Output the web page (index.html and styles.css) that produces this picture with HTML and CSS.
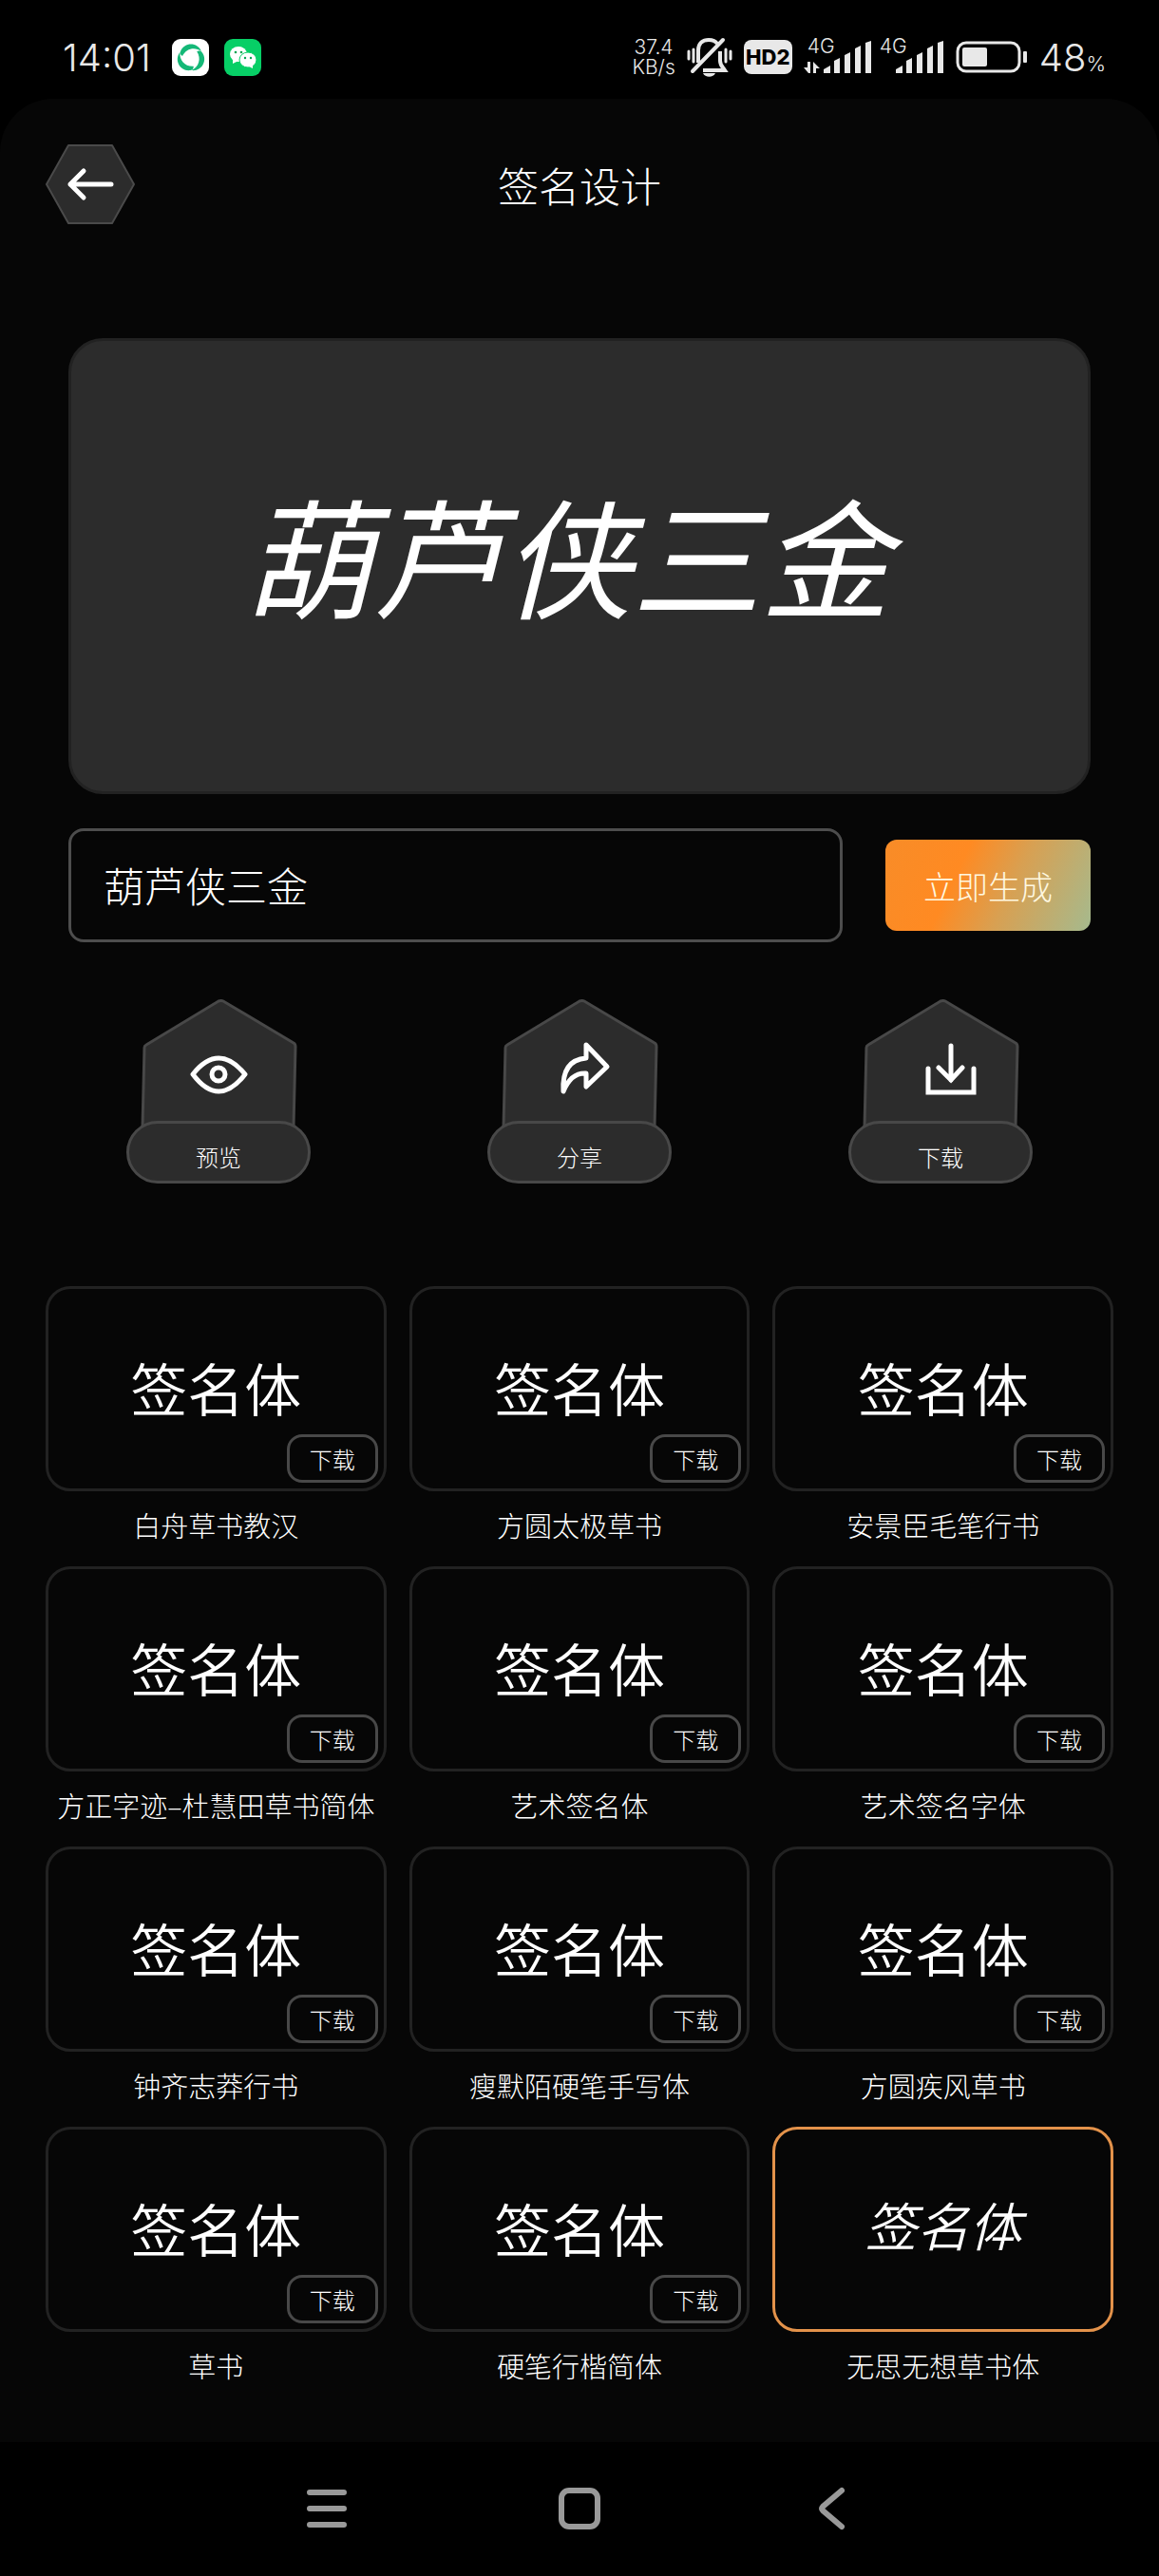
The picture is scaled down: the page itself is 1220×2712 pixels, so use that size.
FILE: index.html
```html
<!DOCTYPE html>
<html lang="zh-CN">
<head>
    <meta charset="UTF-8">
    <meta name="viewport" content="width=device-width, initial-scale=1.0">
    <title>签名设计</title>
    <link rel="stylesheet" href="styles.css">
</head>
<body>

    <!-- 状态栏 -->
    <div class="status-bar">
        <span class="clock">14:01</span>
        <svg class="app-icon" viewBox="0 0 39 39">
            <rect width="39" height="39" rx="9" fill="#fff"/>
            <g fill="#14b877">
                <path d="M9 13C13 3 27 3 31 13C24 8 15 10 11 18C9 17 8 15 9 13z"/>
                <path d="M9 13C13 3 27 3 31 13C24 8 15 10 11 18C9 17 8 15 9 13z" transform="rotate(120 20 20)"/>
                <path d="M9 13C13 3 27 3 31 13C24 8 15 10 11 18C9 17 8 15 9 13z" transform="rotate(240 20 20)"/>
            </g>
        </svg>
        <svg class="app-icon" viewBox="0 0 39 39">
            <rect width="39" height="39" rx="9" fill="#07cf66"/>
            <ellipse cx="15" cy="16" rx="9" ry="8" fill="#fff"/>
            <path d="M9 21v5l6-3z" fill="#fff"/>
            <ellipse cx="25" cy="22" rx="9" ry="8" fill="#fff" stroke="#07cf66" stroke-width="1"/>
            <path d="M26 29l4 2v-4z" fill="#fff"/>
            <g fill="#07a552"><circle cx="12" cy="14" r="1.300"/><circle cx="18" cy="14" r="1.300"/><circle cx="22" cy="20" r="1.200"/><circle cx="28" cy="20" r="1.200"/></g>
        </svg>

        <div class="status-right">
            <span class="net-speed">37.4<br>KB/s</span>
            <svg class="bell" viewBox="0 0 48 42">
                <g fill="none" stroke="#e8e8e8" stroke-width="4">
                    <path d="M12 27V14C12 6 17 3 23 3c4 0 7 1 9 4M35 15v10c0 5 3 7 5 10H17"/>
                    <path d="M6 36L38 3" stroke-linecap="round"/>
                    <path d="M2 15v8M7 13v13M41 13v13M46 15v8" stroke-width="3" stroke-linecap="round"/>
                </g>
                <path d="M17 38h13c-2 5-11 5-13 0z" fill="#e8e8e8"/>
            </svg>
            <span class="hd">HD2</span>
            <div class="signal">
                <span>4G</span>
                <svg viewBox="0 0 72 36">
                    <path d="M4 23h3v12H5L0 29h4zM10 35V23l7 7h-4v5z"/>
                    <path d="M21 35v-4l7-4v8zM32 35V22l6-3v16zM43 35V16l6-3v22zM54 35V9l6-3v29zM65 35V3l6-2v34z"/>
                </svg>
            </div>
            <div class="signal">
                <span>4G</span>
                <svg viewBox="0 0 72 36">
                    <path d="M21 35v-4l7-4v8zM32 35V22l6-3v16zM43 35V16l6-3v22zM54 35V9l6-3v29zM65 35V3l6-2v34z"/>
                </svg>
            </div>
            <svg class="battery" viewBox="0 0 76 34">
                <rect x="2" y="2" width="65" height="30" rx="9" fill="none" stroke="#e8e8e8" stroke-width="3"/>
                <rect x="7" y="7" width="26" height="20" rx="2" fill="#e8e8e8"/>
                <rect x="71" y="11" width="4" height="12" rx="1" fill="#e8e8e8"/>
            </svg>
            <span class="percent">48<small>%</small></span>
        </div>
    </div>

    <main class="app">
        <header class="title-bar">
            <button type="button" class="back" aria-label="返回">
                <svg viewBox="0 0 94 84">
                    <path d="M24 1h46l23 41-23 41H24L1 42z" fill="#2c2c2c" stroke="#4a4a4a" stroke-width="2" stroke-linejoin="round"/>
                    <path d="M40 28L26 42l14 14M26 42h43" fill="none" stroke="#fff" stroke-width="5" stroke-linecap="round" stroke-linejoin="round"/>
                </svg>
            </button>
            <h1>签名设计</h1>
        </header>

        <div class="preview">葫芦侠三金</div>

        <form class="name-form">
            <input type="text" name="name" value="葫芦侠三金" aria-label="姓名">
            <button type="submit">立即生成</button>
        </form>

        <!-- 预览、分享、下载 -->
        <div class="actions">
            <button type="button" class="action">
                <svg class="house" viewBox="0 0 194 134">
                    <path d="M17 134L19 51Q19 49 21 48L97 2Q100 1 102 2L176 46Q178 47 178 50L176 134" fill="#2c2c2c" stroke="#484848" stroke-width="3"/>
                    <path d="M70 79Q97 45 125 79Q97 115 70 79z" fill="none" stroke="#fff" stroke-width="5" stroke-linejoin="round"/>
                    <circle cx="97" cy="79" r="7" fill="none" stroke="#fff" stroke-width="5"/>
                </svg>
                <span>预览</span>
            </button>
            <button type="button" class="action">
                <svg class="house" viewBox="0 0 194 134">
                    <path d="M17 134L19 51Q19 49 21 48L97 2Q100 1 102 2L176 46Q178 47 178 50L176 134" fill="#2c2c2c" stroke="#484848" stroke-width="3"/>
                    <path d="M104 48L126 71L104 92V78Q88 77 80 97Q78 64 104 62z" fill="none" stroke="#fff" stroke-width="5" stroke-linejoin="round"/>
                </svg>
                <span>分享</span>
            </button>
            <button type="button" class="action">
                <svg class="house" viewBox="0 0 194 134">
                    <path d="M17 134L19 51Q19 49 21 48L97 2Q100 1 102 2L176 46Q178 47 178 50L176 134" fill="#2c2c2c" stroke="#484848" stroke-width="3"/>
                    <path d="M108 49V85M95 72L108 85L120 72M84 73V98H132V73" fill="none" stroke="#fff" stroke-width="5" stroke-linecap="round"/>
                </svg>
                <span>下载</span>
            </button>
        </div>

        <!-- 字体列表 -->
        <div class="font-list">
            <div class="font-item">
                <div class="font-card">签名体<button type="button">下载</button></div>
                <p>白舟草书教汉</p>
            </div>
            <div class="font-item">
                <div class="font-card">签名体<button type="button">下载</button></div>
                <p>方圆太极草书</p>
            </div>
            <div class="font-item">
                <div class="font-card">签名体<button type="button">下载</button></div>
                <p>安景臣毛笔行书</p>
            </div>
            <div class="font-item">
                <div class="font-card">签名体<button type="button">下载</button></div>
                <p>方正字迹–杜慧田草书简体</p>
            </div>
            <div class="font-item">
                <div class="font-card">签名体<button type="button">下载</button></div>
                <p>艺术签名体</p>
            </div>
            <div class="font-item">
                <div class="font-card">签名体<button type="button">下载</button></div>
                <p>艺术签名字体</p>
            </div>
            <div class="font-item">
                <div class="font-card">签名体<button type="button">下载</button></div>
                <p>钟齐志莽行书</p>
            </div>
            <div class="font-item">
                <div class="font-card">签名体<button type="button">下载</button></div>
                <p>瘦默陌硬笔手写体</p>
            </div>
            <div class="font-item">
                <div class="font-card">签名体<button type="button">下载</button></div>
                <p>方圆疾风草书</p>
            </div>
            <div class="font-item">
                <div class="font-card">签名体<button type="button">下载</button></div>
                <p>草书</p>
            </div>
            <div class="font-item">
                <div class="font-card">签名体<button type="button">下载</button></div>
                <p>硬笔行楷简体</p>
            </div>
            <div class="font-item">
                <div class="font-card selected">签名体</div>
                <p>无思无想草书体</p>
            </div>
        </div>
    </main>

    <!-- 系统导航栏 -->
    <nav class="nav-bar">
        <button type="button" aria-label="菜单">
            <svg viewBox="0 0 48 48"><path d="M6 6h36M6 23h36M6 40h36"/></svg>
        </button>
        <button type="button" aria-label="主页">
            <svg viewBox="0 0 48 48"><rect x="5" y="4" width="38" height="38" rx="8"/></svg>
        </button>
        <button type="button" aria-label="返回上一页">
            <svg viewBox="0 0 48 48"><path d="M34 4L14 21q-2 2 0 4L34 42"/></svg>
        </button>
    </nav>

</body>
</html>
```
FILE: styles.css
```css
* {
    box-sizing: border-box;
}

body {
    margin: 0;
    min-height: 100vh;
    display: flex;
    flex-direction: column;
    background-color: #000;
    color: #fff;
    font-family: 'Noto Sans CJK SC', sans-serif;
    font-weight: 300;
}

button {
    padding: 0;
    border: none;
    background: none;
    color: inherit;
    font: inherit;
    cursor: pointer;
}

svg {
    display: block;
}

.status-bar {
    height: 104px;
    padding: 16px 56px 0 66px;
    display: flex;
    align-items: center;
    color: #e8e8e8;
    font-family: 'Inter', sans-serif;
    font-weight: 350;
}

.clock {
    font-size: 40px;
    margin-right: 22px;
}

.app-icon {
    width: 39px;
    height: 39px;
    margin-right: 16px;
}

.status-right {
    margin-left: auto;
    display: flex;
    align-items: center;
    gap: 12px;
}

.net-speed {
    font-size: 21px;
    line-height: 21px;
    text-align: center;
}

.bell {
    width: 48px;
    height: 42px;
}

.hd {
    width: 51px;
    height: 36px;
    border-radius: 8px;
    background-color: #e8e8e8;
    color: #000;
    font-size: 22px;
    font-weight: 800;
    line-height: 36px;
    text-align: center;
}

.signal {
    position: relative;
    width: 72px;
}

.signal + .signal {
    margin-left: -8px;
}

.signal span {
    position: absolute;
    left: 4px;
    top: -4px;
    font-size: 21px;
    line-height: 21px;
}

.signal svg {
    width: 72px;
    height: 36px;
    fill: #e8e8e8;
}

.battery {
    width: 76px;
    height: 34px;
}

.percent {
    font-size: 40px;
}

.percent small {
    font-size: 22px;
}

.app {
    flex: 1;
    padding: 48px 48px 0;
    border-radius: 56px 56px 0 0;
    background-color: #060606;
}

.title-bar {
    display: grid;
    grid-template-columns: 94px 1fr 94px;
    align-items: center;
}

.back svg {
    width: 94px;
    height: 84px;
}

h1 {
    margin: 0;
    font-size: 43px;
    font-weight: 300;
    line-height: 84px;
    text-align: center;
}

.preview {
    height: 480px;
    margin: 120px 24px 36px;
    padding: 0 26px 30px 0;
    display: flex;
    justify-content: center;
    align-items: center;
    border: 3px solid #222;
    border-radius: 36px;
    background-color: #2c2c2c;
    font-size: 136px;
    font-style: italic;
    font-weight: 400;
}

.name-form {
    margin: 0 24px 60px;
    display: flex;
    align-items: center;
    gap: 45px;
}

.name-form input {
    flex: 1;
    min-width: 0;
    height: 120px;
    padding: 0 34px 2px;
    border: 3px solid #4d4d4d;
    border-radius: 16px;
    background: none;
    color: #fff;
    font: inherit;
    font-size: 43px;
}

.name-form button {
    width: 216px;
    height: 96px;
    border-radius: 12px;
    background: linear-gradient(115deg, #f88c28, #ff8a22 35%, #d8a052 60%, #a5ba8e);
    color: #fff8e0;
    font-size: 34px;
}

.actions {
    margin: 0 -8px 108px;
    display: grid;
    grid-template-columns: repeat(3, 1fr);
    justify-items: center;
}

.action {
    width: 194px;
}

.house {
    width: 194px;
    height: 134px;
}

.action span {
    display: block;
    height: 66px;
    margin-top: -6px;
    padding-top: 8px;
    position: relative;
    border: 3px solid #484848;
    border-radius: 33px;
    background-color: #2c2c2c;
    font-size: 24px;
    line-height: 54px;
}

.font-list {
    display: grid;
    grid-template-columns: repeat(3, 1fr);
    gap: 24px;
}

.font-card {
    height: 216px;
    padding-bottom: 6px;
    display: flex;
    justify-content: center;
    align-items: center;
    position: relative;
    border: 3px solid #222;
    border-radius: 26px;
    font-size: 60px;
    font-weight: 350;
}

.font-card button {
    position: absolute;
    right: 6px;
    bottom: 6px;
    width: 96px;
    height: 51px;
    border: 3px solid #484848;
    border-radius: 16px;
    font-size: 24px;
    font-weight: 300;
    line-height: 45px;
}

.font-card.selected {
    padding-bottom: 12px;
    border-color: #e3924a;
    font-size: 55px;
    font-style: italic;
}

.font-item p {
    margin: 15px 0 0;
    font-size: 29px;
    line-height: 40px;
    text-align: center;
    white-space: nowrap;
}

.nav-bar {
    height: 141px;
    display: flex;
    justify-content: center;
    align-items: center;
    gap: 218px;
}

.nav-bar svg {
    width: 48px;
    height: 48px;
    fill: none;
    stroke: #999;
    stroke-width: 6;
    stroke-linecap: round;
}
```
